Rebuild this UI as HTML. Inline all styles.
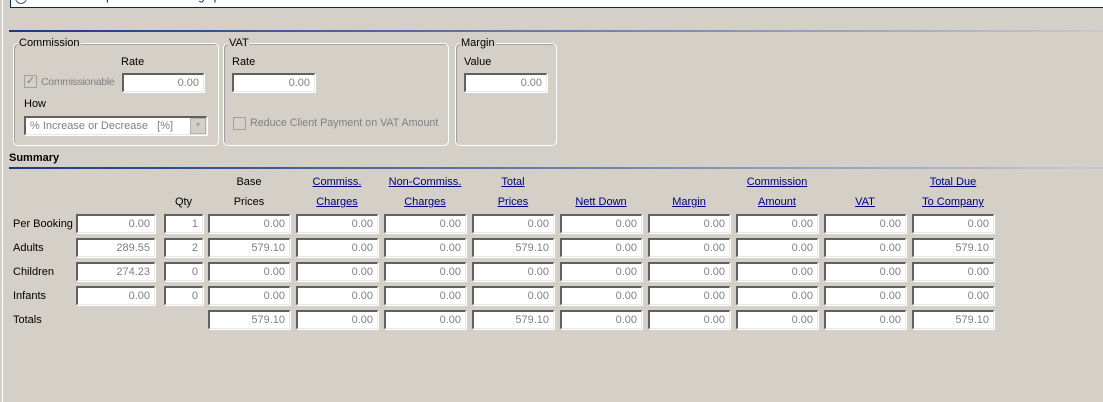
<!DOCTYPE html>
<html><head><style>
body{margin:0;width:1103px;height:402px;background:#d4d0c8;font-family:"Liberation Sans",sans-serif;font-size:11px;position:relative;overflow:hidden;color:#000}
.a{position:absolute}
.lb{position:absolute;white-space:nowrap}
.f{position:absolute;box-sizing:border-box;height:19px;background:#fff;border-top:2px solid #606060;border-left:2px solid #606060;border-right:1px solid #e8e8e8;border-bottom:1px solid #e8e8e8;color:#808080;text-align:right;padding-right:4px;line-height:16px;font-size:11px;box-shadow:1px 1px 0 #fff}
.g{position:absolute;border:1px solid #fff;box-shadow:inset 1px 1px 0 #a0a0a0;border-radius:5px}
.gt{position:absolute;background:#d4d0c8;padding:0 1px;top:-7px;left:4px}
.h{position:absolute;color:#000080;text-decoration:underline;text-align:center;white-space:nowrap}
.hb{position:absolute;text-align:center;white-space:nowrap}
</style></head><body>
<div class="a" style="left:2px;top:0;width:1px;height:402px;background:#fff"></div>
<div class="a" style="left:10px;top:0;width:1093px;height:7px;background:#fff;border-left:1px solid #0a246a;border-bottom:1px solid #0a246a;overflow:hidden">
<div class="a" style="left:4px;top:-8px;width:10px;height:10px;border:1px solid #3060c0;border-radius:50%"></div>
<div class="lb" style="left:20px;top:-9px;">You don't have permission to change prices</div></div>
<div class="a" style="left:9px;top:30px;width:1094px;height:2px;background:linear-gradient(90deg,#1c3a80,#6a7ea8 50%,#c8c8d0)"></div>

<div class="g" style="left:13px;top:43px;width:204px;height:101px"><span class="gt">Commission</span></div>
<div class="lb" style="left:121px;top:56px">Rate</div>
<div class="a" style="left:24px;top:75px;width:11px;height:11px;border:1px solid #a0a0a0;background:#d4d0c8;color:#808080;font-size:11px;line-height:11px;text-align:center">✓</div>
<div class="lb" style="left:41px;top:76px;color:#808080;letter-spacing:-0.3px;font-size:10.5px">Commissionable</div>
<div class="f" style="left:122px;top:73px;width:82px">0.00</div>
<div class="lb" style="left:24px;top:98px">How</div>
<div class="f" style="left:24px;top:116px;width:183px;text-align:left;padding-left:4px;line-height:16px">% Increase or Decrease&nbsp;&nbsp;&nbsp;[%]</div>
<div class="a" style="left:190px;top:118px;width:14px;height:14px;background:#d4d0c8;border:1px solid #b0b0b0;color:#a0a0a0;font-size:7px;text-align:center;line-height:14px">▼</div>

<div class="g" style="left:223px;top:43px;width:224px;height:101px"><span class="gt">VAT</span></div>
<div class="lb" style="left:232px;top:56px">Rate</div>
<div class="f" style="left:232px;top:73px;width:83px">0.00</div>
<div class="a" style="left:233px;top:117px;width:11px;height:11px;border:1px solid #a0a0a0"></div>
<div class="lb" style="left:250px;top:117px;color:#808080;font-size:10.7px">Reduce Client Payment on VAT Amount</div>

<div class="g" style="left:455px;top:43px;width:100px;height:101px"><span class="gt">Margin</span></div>
<div class="lb" style="left:464px;top:56px">Value</div>
<div class="f" style="left:464px;top:73px;width:83px">0.00</div>

<div class="lb" style="left:9px;top:152px;font-weight:bold">Summary</div>
<div class="a" style="left:9px;top:167px;width:1094px;height:2px;background:linear-gradient(90deg,#1c3a80,#6a7ea8 50%,#c8c8d0)"></div>

<div class="hb" style="left:164px;top:196px;width:39px">Qty</div>
<div class="hb" style="left:208px;top:176px;width:82px">Base</div>
<div class="hb" style="left:208px;top:196px;width:82px">Prices</div>
<div class="h" style="left:296px;top:176px;width:82px">Commiss.</div>
<div class="h" style="left:296px;top:196px;width:82px">Charges</div>
<div class="h" style="left:384px;top:176px;width:82px">Non-Commiss.</div>
<div class="h" style="left:384px;top:196px;width:82px">Charges</div>
<div class="h" style="left:472px;top:176px;width:82px">Total</div>
<div class="h" style="left:472px;top:196px;width:82px">Prices</div>
<div class="h" style="left:560px;top:196px;width:82px">Nett Down</div>
<div class="h" style="left:648px;top:196px;width:82px">Margin</div>
<div class="h" style="left:736px;top:176px;width:82px">Commission</div>
<div class="h" style="left:736px;top:196px;width:82px">Amount</div>
<div class="h" style="left:824px;top:196px;width:82px">VAT</div>
<div class="h" style="left:912px;top:176px;width:82px">Total Due</div>
<div class="h" style="left:912px;top:196px;width:82px">To Company</div>

<div id="rows"></div>
<script>
var rows=[["Per Booking","0.00","1","0.00","0.00","0.00","0.00","0.00","0.00","0.00","0.00","0.00"],
["Adults","289.55","2","579.10","0.00","0.00","579.10","0.00","0.00","0.00","0.00","579.10"],
["Children","274.23","0","0.00","0.00","0.00","0.00","0.00","0.00","0.00","0.00","0.00"],
["Infants","0.00","0","0.00","0.00","0.00","0.00","0.00","0.00","0.00","0.00","0.00"],
["Totals",null,null,"579.10","0.00","0.00","579.10","0.00","0.00","0.00","0.00","579.10"]];
var h="";
rows.forEach(function(r,i){var y=214+i*24;
h+='<div class="lb" style="left:13px;top:'+(y+4)+'px">'+r[0]+'</div>';
if(r[1]!==null){h+='<div class="f" style="left:76px;top:'+y+'px;width:79px">'+r[1]+'</div>';
h+='<div class="f" style="left:164px;top:'+y+'px;width:39px">'+r[2]+'</div>';}
for(var c=0;c<9;c++){h+='<div class="f" style="left:'+(208+c*88)+'px;top:'+y+'px;width:82px">'+r[3+c]+'</div>';}
});
document.getElementById("rows").innerHTML=h;
</script>
</body></html>
